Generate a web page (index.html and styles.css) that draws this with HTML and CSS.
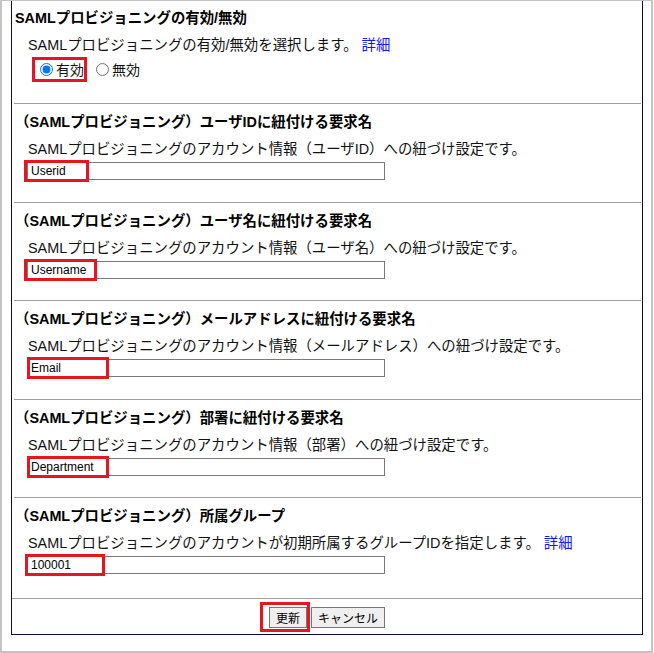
FILE: index.html
```html
<!DOCTYPE html>
<html>
<head>
    <meta charset="utf-8" />
    <title>SAMLプロビジョニング設定</title>
    <link rel="stylesheet" href="styles.css">
</head>
<body>
<div class="frame">
<div class="panel">
    <div class="sec first">
        <div class="ttl">SAMLプロビジョニングの有効/無効</div>
        <div class="desc">SAMLプロビジョニングの有効/無効を選択します。 <a href="#">詳細</a></div>
        <div class="radios">
            <label><input type="radio" name="enable" checked>有効</label>
            <label><input type="radio" name="enable">無効</label>
            <span class="mark m-radio"></span>
        </div>
    </div>
    <div class="sec">
        <div class="ttl">（SAMLプロビジョニング）ユーザIDに紐付ける要求名</div>
        <div class="desc">SAMLプロビジョニングのアカウント情報（ユーザID）への紐づけ設定です。</div>
        <div class="field">
            <input type="text" value="Userid">
            <span class="mark m-userid"></span>
        </div>
    </div>
    <div class="sec">
        <div class="ttl">（SAMLプロビジョニング）ユーザ名に紐付ける要求名</div>
        <div class="desc">SAMLプロビジョニングのアカウント情報（ユーザ名）への紐づけ設定です。</div>
        <div class="field">
            <input type="text" value="Username">
            <span class="mark m-username"></span>
        </div>
    </div>
    <div class="sec">
        <div class="ttl">（SAMLプロビジョニング）メールアドレスに紐付ける要求名</div>
        <div class="desc">SAMLプロビジョニングのアカウント情報（メールアドレス）への紐づけ設定です。</div>
        <div class="field">
            <input type="text" value="Email">
            <span class="mark m-email"></span>
        </div>
    </div>
    <div class="sec">
        <div class="ttl">（SAMLプロビジョニング）部署に紐付ける要求名</div>
        <div class="desc">SAMLプロビジョニングのアカウント情報（部署）への紐づけ設定です。</div>
        <div class="field">
            <input type="text" value="Department">
            <span class="mark m-dept"></span>
        </div>
    </div>
    <div class="sec last">
        <div class="ttl">（SAMLプロビジョニング）所属グループ</div>
        <div class="desc">SAMLプロビジョニングのアカウントが初期所属するグループIDを指定します。 <a href="#">詳細</a></div>
        <div class="field">
            <input type="text" value="100001">
            <span class="mark m-group"></span>
        </div>
    </div>
    <div class="btns">
        <span class="btnwrap"><button type="button">更新</button><span class="mark m-btn"></span></span>
        <button type="button">キャンセル</button>
    </div>
</div>
</div>
</body>
</html>
```

FILE: styles.css
```css
*{margin: 0;padding: 0;box-sizing: border-box;}
body{
    background-color: #fff;
    font-family: "Liberation Sans", "Noto Sans CJK JP", sans-serif;
    color: #111;
    text-spacing-trim: space-all;
}
.frame{
    width: 653px;
    height: 653px;
    border: 2px solid #c4c4c4;
    border-top-width: 1px;
    padding: 0 8px 16px 9px;
}
.panel{
    border: 1px solid #0c0c44;
    border-top: none;
}
.sec{
    margin: 0 1px 0 2px;
    border-top: 1px solid #a0a0a0;
    padding: 8px 0 21.6px 1px;
}
.sec.first{
    border-top: none;
    padding-top: 7px;
    padding-bottom: 23px;
}
.sec.last{
    padding-bottom: 23.6px;
}
.ttl{
    font-size: 14.4px;
    font-weight: bold;
    line-height: 20px;
    color: #000;
}
.desc{
    font-size: 14.4px;
    line-height: 22px;
    margin: 6px 0 0 13px;
}
.desc a{
    color: #1515ee;
    text-decoration: none;
}
.radios{
    position: relative;
    display: flex;
    align-items: center;
    height: 22px;
    margin-top: 2px;
    padding-left: 25px;
    font-size: 14px;
}
.radios label{
    display: flex;
    align-items: center;
    margin-right: 12px;
}
.radios input{
    width: 13px;
    height: 13px;
    margin: 0 3px 0 0;
}
.field{
    position: relative;
    width: 358px;
    margin: 2px 0 0 12px;
}
.field input{
    display: block;
    width: 358px;
    height: 18px;
    border: 1px solid #7a7a7a;
    padding: 0 3px;
    font-family: "Liberation Sans", sans-serif;
    font-size: 12px;
    color: #000;
    outline: none;
}
.mark{
    position: absolute;
    border: 3px solid #e5161f;
    pointer-events: none;
}
.m-radio{left: 17px;top: -1px;width: 55px;height: 25px;}
.field .mark{top: -2px;height: 22px;}
.m-userid{left: -3px;width: 65px;}
.m-username{left: -3px;width: 73px;}
.m-email{left: 0;width: 82px;}
.m-dept{left: 0;width: 82px;}
.m-group{left: -2px;width: 80px;}
.btns{
    border-top: 1px solid #a0a0a0;
    display: flex;
    justify-content: center;
    gap: 4px;
    padding: 8px 0 6px;
}
.btnwrap{
    position: relative;
    display: block;
}
.btns button{
    display: block;
    height: 21px;
    padding: 0 6px;
    border: 1px solid #767676;
    background-color: #efefef;
    font-family: "Liberation Sans", "Noto Sans CJK JP", sans-serif;
    font-size: 12px;
    color: #000;
}
.m-btn{left: -9px;top: -5px;width: 50px;height: 30px;}
```
